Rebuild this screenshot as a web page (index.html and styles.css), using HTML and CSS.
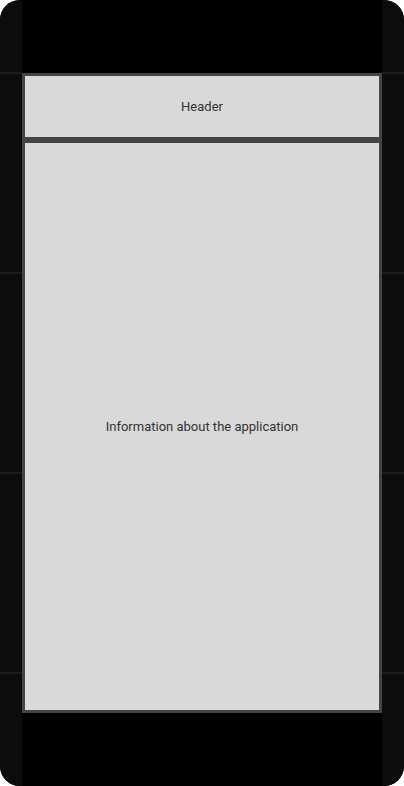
FILE: index.html
```html
<!DOCTYPE html>
<html>
<head>
<meta charset="utf-8">
<link rel="stylesheet" href="styles.css">
</head>
<body>
<div class="device">
  <div class="side"></div>
  <div class="center">
    <div class="screen">
      <div class="header">Header</div>
      <div class="divider"></div>
      <div class="content">Information about the application</div>
    </div>
  </div>
  <div class="side"></div>
</div>
</body>
</html>
```
FILE: styles.css
```css
html, body {
  margin: 0;
  padding: 0;
  background: #ffffff;
}
.device {
  width: 404px;
  height: 786px;
  border-radius: 20px;
  overflow: hidden;
  background: #0c0c0c;
  display: grid;
  grid-template-columns: 22px 360px 22px;
}
.side {
  background:
    linear-gradient(#1c1c1c, #1c1c1c) 0 72px / 100% 2px no-repeat,
    linear-gradient(#1c1c1c, #1c1c1c) 0 272px / 100% 2px no-repeat,
    linear-gradient(#1c1c1c, #1c1c1c) 0 472px / 100% 2px no-repeat,
    linear-gradient(#1c1c1c, #1c1c1c) 0 672px / 100% 2px no-repeat,
    #0c0c0c;
}
.center {
  background: #000;
  padding-top: 73px;
}
.screen {
  box-sizing: border-box;
  width: 360px;
  height: 640px;
  border: 3px solid #444444;
  background: #d9d9d9;
  display: flex;
  flex-direction: column;
  font-family: Roboto, "Liberation Sans", sans-serif;
  font-size: 13px;
  color: #333333;
}
.header {
  height: 61px;
  display: flex;
  align-items: center;
  justify-content: center;
}
.divider {
  height: 6px;
  background: #444444;
}
.content {
  flex: 1;
  display: flex;
  align-items: center;
  justify-content: center;
}
```
